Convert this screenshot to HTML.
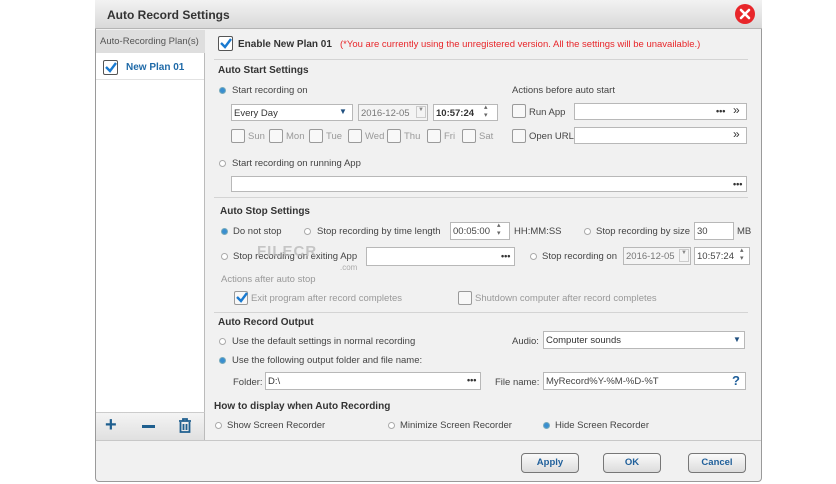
<!DOCTYPE html>
<html><head><meta charset="utf-8"><style>
*{box-sizing:border-box;margin:0;padding:0}
body{width:836px;height:484px;background:#fff;font-family:"Liberation Sans",sans-serif;font-size:9.5px;color:#444;position:relative;overflow:hidden}
.a{position:absolute;white-space:nowrap}
.dlg{position:absolute;left:95px;top:0;width:667px;height:482px;background:#f1f1f1;border:1px solid #9a9a9a;border-radius:0 0 4px 4px}
.title{position:absolute;left:95px;top:0;width:667px;height:29px;background:linear-gradient(#f2f2f2,#d9d9d9);border-bottom:1px solid #b5b5b5}
.inp{position:absolute;background:#fff;border:1px solid #b8b8b8;height:17px}
.cb{position:absolute;width:14px;height:14px;border:1px solid #9a9a9a;border-radius:2px;background:#f8f8f8}
.cbc{position:absolute;width:15px;height:15px;border:1px solid #555;border-radius:2px;background:#fff}
.r{position:absolute;width:7px;height:7px;border-radius:50%;border:1px solid #aaa;background:#fff}
.rs{position:absolute;width:7px;height:7px;border-radius:50%;background:#3a8fd0;border:1px solid #7ab}
.h{position:absolute;font-weight:bold;color:#333;font-size:10px}
.sep{position:absolute;left:214px;width:534px;height:1px;background:#d4d4d4}
.g{color:#999}
.btn{position:absolute;top:453px;width:58px;height:20px;border:1px solid #777;border-radius:4px;background:linear-gradient(#fafafa,#dcdcdc);font-weight:bold;color:#1f5f9a;text-align:center;line-height:18px;font-size:9.5px}
.dots{position:absolute;font-weight:bold;color:#333;font-size:9px}
</style></head><body>
<div class="dlg"></div>
<div class="title"></div>
<div class="a" style="left:107px;top:8px;font-size:12px;font-weight:bold;color:#333">Auto Record Settings</div>
<svg class="a" style="left:734px;top:3px" width="22" height="22"><circle cx="11" cy="11" r="10" fill="#e8262a"/><path d="M7 7L15 15M15 7L7 15" stroke="#fff" stroke-width="2.6" stroke-linecap="round"/></svg>

<div class="a" style="left:96px;top:30px;width:109px;height:382px;background:#fff;border-right:1px solid #bbb"></div>
<div class="a" style="left:96px;top:30px;width:109px;height:23px;background:#dedede;color:#555;font-size:9.5px;padding:6px 0 0 4px">Auto-Recording Plan(s)</div>
<div class="a" style="left:96px;top:79px;width:108px;height:1px;background:#e2e2e2"></div>
<div class="cbc" style="left:103px;top:60px"></div>
<svg class="a" style="left:103px;top:59px" width="16" height="16"><path d="M3 8L7 12L13 4" stroke="#1a7ad0" stroke-width="2.4" fill="none"/></svg>
<div class="a" style="left:126px;top:62px;font-weight:bold;color:#1f6aa8;font-size:10px">New Plan 01</div>
<div class="a" style="left:96px;top:412px;width:109px;height:28px;background:linear-gradient(#f4f4f4,#e0e0e0);border-top:1px solid #ccc;border-right:1px solid #bbb"></div>
<div class="a" style="left:105px;top:414px;font-size:20px;color:#1f5f8f;font-weight:bold">+</div>
<div class="a" style="left:142px;top:425px;width:13px;height:3px;background:#1f5f8f"></div>
<svg class="a" style="left:178px;top:418px" width="14" height="16"><path d="M1 3H13M5 3V1H9V3M2.5 4V14H11.5V4M5.5 6V12M8.5 6V12" stroke="#1f5f8f" stroke-width="1.8" fill="none"/></svg>

<div class="cbc" style="left:218px;top:36px"></div>
<svg class="a" style="left:218px;top:35px" width="16" height="16"><path d="M3 8L7 12L13 4" stroke="#1a7ad0" stroke-width="2.4" fill="none"/></svg>
<div class="a" style="left:238px;top:39px;font-weight:bold;color:#333;font-size:10px">Enable New Plan 01</div>
<div class="a" style="left:340px;top:39px;color:#e8262a;font-size:9.5px">(*You are currently using the unregistered version. All the settings will be unavailable.)</div>
<div class="sep" style="top:59px"></div>

<div class="h" style="left:218px;top:65px">Auto Start Settings</div>
<div class="rs" style="left:219px;top:87px"></div>
<div class="a" style="left:232px;top:85px">Start recording on</div>
<div class="a" style="left:512px;top:85px">Actions before auto start</div>
<div class="inp" style="left:231px;top:104px;width:122px"></div>
<div class="a" style="left:234px;top:108px;color:#333">Every Day</div>
<div class="a" style="left:339px;top:107px;font-size:8px;color:#1f4f7f">▼</div>
<div class="inp" style="left:358px;top:104px;width:70px;background:#f4f4f4"></div>
<div class="a g" style="left:361px;top:108px;color:#777">2016-12-05</div>
<div class="a" style="left:416px;top:106px;width:10px;height:12px;border:1px solid #ccc;font-size:6px;color:#888;text-align:center">▼</div>
<div class="inp" style="left:433px;top:104px;width:65px"></div>
<div class="a" style="left:436px;top:108px;font-weight:bold;color:#333">10:57:24</div>
<div class="a" style="left:484px;top:104px;font-size:7px;line-height:8px;color:#666">▴<br>▾</div>
<div class="cb" style="left:512px;top:104px"></div>
<div class="a" style="left:529px;top:107px">Run App</div>
<div class="inp" style="left:574px;top:103px;width:173px"></div>
<div class="dots" style="left:716px;top:106px">•••</div>
<div class="a" style="left:733px;top:103px;font-size:12px;color:#333">»</div>
<div class="cb" style="left:512px;top:129px"></div>
<div class="a" style="left:529px;top:131px">Open URL</div>
<div class="inp" style="left:574px;top:127px;width:173px"></div>
<div class="a" style="left:733px;top:127px;font-size:12px;color:#333">»</div>

<div class="cb" style="left:231px;top:129px"></div><div class="a g" style="left:248px;top:131px">Sun</div>
<div class="cb" style="left:269px;top:129px"></div><div class="a g" style="left:286px;top:131px">Mon</div>
<div class="cb" style="left:309px;top:129px"></div><div class="a g" style="left:326px;top:131px">Tue</div>
<div class="cb" style="left:348px;top:129px"></div><div class="a g" style="left:365px;top:131px">Wed</div>
<div class="cb" style="left:387px;top:129px"></div><div class="a g" style="left:404px;top:131px">Thu</div>
<div class="cb" style="left:427px;top:129px"></div><div class="a g" style="left:444px;top:131px">Fri</div>
<div class="cb" style="left:462px;top:129px"></div><div class="a g" style="left:479px;top:131px">Sat</div>

<div class="r" style="left:219px;top:160px"></div>
<div class="a" style="left:232px;top:158px">Start recording on running App</div>
<div class="inp" style="left:231px;top:176px;width:516px;height:16px"></div>
<div class="dots" style="left:733px;top:179px">•••</div>
<div class="sep" style="top:197px"></div>

<div class="h" style="left:220px;top:206px">Auto Stop Settings</div>
<div class="rs" style="left:221px;top:228px"></div>
<div class="a" style="left:233px;top:226px">Do not stop</div>
<div class="r" style="left:304px;top:228px"></div>
<div class="a" style="left:317px;top:226px">Stop recording by time length</div>
<div class="inp" style="left:450px;top:222px;width:60px;height:18px"></div>
<div class="a" style="left:453px;top:226px">00:05:00</div>
<div class="a" style="left:497px;top:222px;font-size:7px;line-height:8px;color:#666">▴<br>▾</div>
<div class="a" style="left:514px;top:226px">HH:MM:SS</div>
<div class="r" style="left:584px;top:228px"></div>
<div class="a" style="left:596px;top:226px">Stop recording by size</div>
<div class="inp" style="left:694px;top:222px;width:40px;height:18px"></div>
<div class="a" style="left:697px;top:226px">30</div>
<div class="a" style="left:737px;top:226px">MB</div>

<div class="r" style="left:221px;top:253px"></div>
<div class="a" style="left:233px;top:251px">Stop recording on exiting App</div>
<div class="a" style="left:257px;top:243px;font-size:15px;color:#bbb;font-weight:bold;letter-spacing:1px;opacity:.8">FILECR</div>
<div class="a" style="left:340px;top:263px;font-size:8px;color:#aaa">.com</div>
<div class="inp" style="left:366px;top:247px;width:149px;height:19px"></div>
<div class="dots" style="left:501px;top:251px">•••</div>
<div class="r" style="left:530px;top:253px"></div>
<div class="a" style="left:542px;top:251px">Stop recording on</div>
<div class="inp" style="left:623px;top:247px;width:68px;height:18px;background:#f4f4f4"></div>
<div class="a" style="left:626px;top:251px;color:#777">2016-12-05</div>
<div class="a" style="left:679px;top:249px;width:10px;height:13px;border:1px solid #ccc;font-size:6px;color:#888;text-align:center">▼</div>
<div class="inp" style="left:694px;top:247px;width:56px;height:18px"></div>
<div class="a" style="left:697px;top:251px">10:57:24</div>
<div class="a" style="left:740px;top:247px;font-size:7px;line-height:8px;color:#666">▴<br>▾</div>

<div class="a g" style="left:221px;top:274px">Actions after auto stop</div>
<div class="cb" style="left:234px;top:291px"></div>
<svg class="a" style="left:234px;top:289px" width="16" height="16"><path d="M3 8L7 12L13 4" stroke="#1a7ad0" stroke-width="2.4" fill="none"/></svg>
<div class="a g" style="left:251px;top:293px">Exit program after record completes</div>
<div class="cb" style="left:458px;top:291px"></div>
<div class="a g" style="left:475px;top:293px">Shutdown computer after record completes</div>
<div class="sep" style="top:312px"></div>

<div class="h" style="left:218px;top:317px">Auto Record Output</div>
<div class="r" style="left:219px;top:338px"></div>
<div class="a" style="left:232px;top:336px">Use the default settings in normal recording</div>
<div class="a" style="left:512px;top:336px">Audio:</div>
<div class="inp" style="left:543px;top:331px;width:202px;height:18px"></div>
<div class="a" style="left:546px;top:335px;color:#333">Computer sounds</div>
<div class="a" style="left:733px;top:335px;font-size:8px;color:#1f4f7f">▼</div>
<div class="rs" style="left:219px;top:357px"></div>
<div class="a" style="left:232px;top:355px">Use the following output folder and file name:</div>
<div class="a" style="left:233px;top:377px">Folder:</div>
<div class="inp" style="left:265px;top:372px;width:216px;height:18px"></div>
<div class="a" style="left:268px;top:376px;color:#333">D:\</div>
<div class="dots" style="left:467px;top:375px">•••</div>
<div class="a" style="left:495px;top:377px">File name:</div>
<div class="inp" style="left:543px;top:372px;width:203px;height:18px"></div>
<div class="a" style="left:546px;top:376px">MyRecord%Y-%M-%D-%T</div>
<div class="a" style="left:732px;top:373px;font-size:13px;font-weight:bold;color:#1f5f9a">?</div>

<div class="h" style="left:214px;top:401px">How to display when Auto Recording</div>
<div class="r" style="left:215px;top:422px"></div>
<div class="a" style="left:227px;top:420px">Show Screen Recorder</div>
<div class="r" style="left:388px;top:422px"></div>
<div class="a" style="left:400px;top:420px">Minimize Screen Recorder</div>
<div class="rs" style="left:543px;top:422px"></div>
<div class="a" style="left:555px;top:420px">Hide Screen Recorder</div>

<div class="a" style="left:96px;top:440px;width:665px;height:1px;background:#c8c8c8"></div>
<div class="btn" style="left:521px">Apply</div>
<div class="btn" style="left:603px">OK</div>
<div class="btn" style="left:688px">Cancel</div>
</body></html>
